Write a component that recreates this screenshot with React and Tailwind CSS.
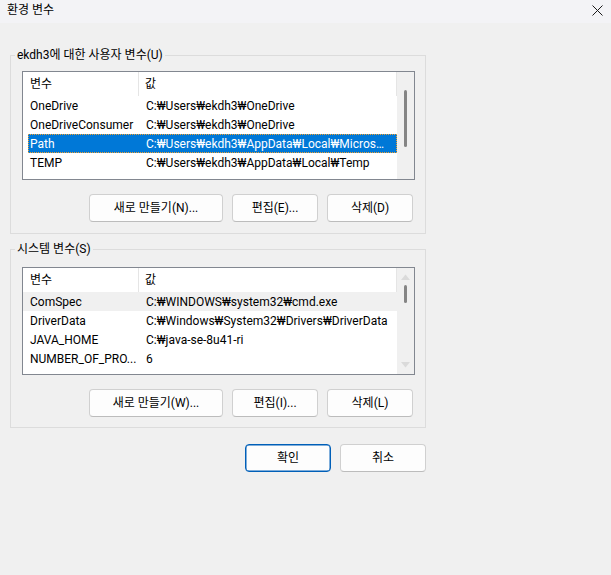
import React from 'react';

const FONT = { fontFamily: 'Roboto, "Noto Sans CJK KR", sans-serif' };

const userVars = [
  ['OneDrive', 'C:₩Users₩ekdh3₩OneDrive'],
  ['OneDriveConsumer', 'C:₩Users₩ekdh3₩OneDrive'],
  ['Path', 'C:₩Users₩ekdh3₩AppData₩Local₩Microsoft₩WindowsApps;'],
  ['TEMP', 'C:₩Users₩ekdh3₩AppData₩Local₩Temp'],
];

const systemVars = [
  ['ComSpec', 'C:₩WINDOWS₩system32₩cmd.exe'],
  ['DriverData', 'C:₩Windows₩System32₩Drivers₩DriverData'],
  ['JAVA_HOME', 'C:₩java-se-8u41-ri'],
  ['NUMBER_OF_PRO...', '6'],
];

const Button = ({ children, width, primary }) => (
  <button
    className={
      'h-[28px] rounded-[4px] bg-[#fdfdfd] text-[12px] text-black ' +
      width +
      (primary ? ' border border-[#005fb8] shadow-[inset_0_0_0_0.5px_#005fb8]' : ' border border-[#d0d0d0] border-b-[#bcbcbc]')
    }
  >
    {children}
  </button>
);

const VarList = ({ rows, selected, hover, arrows, thumbTop, thumbHeight, height }) => (
  <div className={'flex w-[393px] border border-[#828790] bg-white ' + height}>
    <div className="flex-1 min-w-0 overflow-hidden">
      <div className="flex h-[24px] items-center">
        <div className="w-[116px] h-full border-r border-[#e5e5e5] pl-[7px] flex items-center">변수</div>
        <div className="flex-1 h-full border-r border-[#e5e5e5] pl-[6px] flex items-center">값</div>
      </div>
      {rows.map(([name, value], i) => (
        <div
          key={name}
          className={
            'flex h-[19px] items-center ' +
            (i === selected
              ? 'ml-[5px] bg-[#0078d7] text-white outline outline-1 outline-dotted outline-[#f0a030] -outline-offset-1'
              : i === hover
              ? 'bg-[#f0f0f0]'
              : '')
          }
        >
          <div className={'shrink-0 whitespace-nowrap overflow-hidden ' + (i === selected ? 'w-[111px] pl-[2px]' : 'w-[116px] pl-[7px]')}>{name}</div>
          <div className={'flex-1 min-w-0 pl-[7px] ' + (i === selected ? 'truncate pr-[10px]' : 'whitespace-nowrap overflow-hidden')}>{value}</div>
        </div>
      ))}
    </div>
    <div className="relative w-[17px] shrink-0 bg-[#f0f0f0]">
      {arrows && (
        <>
          <svg className="absolute left-[4px] top-[6px]" width="9" height="6" viewBox="0 0 9 6">
            <path d="M0 6 L4.5 0.5 L9 6 Z" fill="#dadada" />
          </svg>
          <svg className="absolute left-[4px] bottom-[6px]" width="9" height="6" viewBox="0 0 9 6">
            <path d="M0 0 L4.5 5.5 L9 0 Z" fill="#dadada" />
          </svg>
        </>
      )}
      <div
        className="absolute left-[7px] w-[3px] rounded-full bg-[#858585]"
        style={{ top: thumbTop, height: thumbHeight }}
      />
    </div>
  </div>
);

const Group = ({ label, children, className }) => (
  <div className={'relative ml-[10px] w-[416px] border border-[#dcdcdc] pl-[11px] pr-[10px] ' + className}>
    <span className="absolute -top-[9px] left-[4px] bg-[#f0f0f0] px-[2px] leading-[16px]">{label}</span>
    {children}
  </div>
);

export default function App() {
  return (
    <div className="w-[611px] h-[575px] bg-[#f0f0f0] text-[12px] text-black overflow-hidden" style={FONT}>
      <div className="flex h-[23px] items-center justify-between bg-[#f3f3f6] pl-[7px] pr-[8px]">
        <span className="text-[12px] -mt-[3px]">환경 변수</span>
        <svg className="-mt-[3px]" width="11" height="11" viewBox="0 0 11 11">
          <path d="M0.5 0.5 L10.5 10.5 M10.5 0.5 L0.5 10.5" stroke="#1a1a1a" strokeWidth="1" />
        </svg>
      </div>

      <Group label="ekdh3에 대한 사용자 변수(U)" className="mt-[32px] pt-[15px] pb-[11px]">
        <VarList rows={userVars} selected={2} arrows={false} thumbTop={18} thumbHeight={57} height="h-[109px]" />
        <div className="mt-[14px] flex w-[393px] justify-end gap-[9px] pr-[2px]">
          <Button width="w-[134px]">새로 만들기(N)...</Button>
          <Button width="w-[86px]">편집(E)...</Button>
          <Button width="w-[86px]">삭제(D)</Button>
        </div>
      </Group>

      <Group label="시스템 변수(S)" className="mt-[15px] pt-[17px] pb-[10px]">
        <VarList rows={systemVars} hover={0} arrows thumbTop={17} thumbHeight={18} height="h-[108px]" />
        <div className="mt-[14px] flex w-[393px] justify-end gap-[9px] pr-[2px]">
          <Button width="w-[134px]">새로 만들기(W)...</Button>
          <Button width="w-[86px]">편집(I)...</Button>
          <Button width="w-[86px]">삭제(L)</Button>
        </div>
      </Group>

      <div className="mt-[16px] flex justify-start gap-[9px] pl-[245px]">
        <Button width="w-[86px]" primary>확인</Button>
        <Button width="w-[86px]">취소</Button>
      </div>
    </div>
  );
}
